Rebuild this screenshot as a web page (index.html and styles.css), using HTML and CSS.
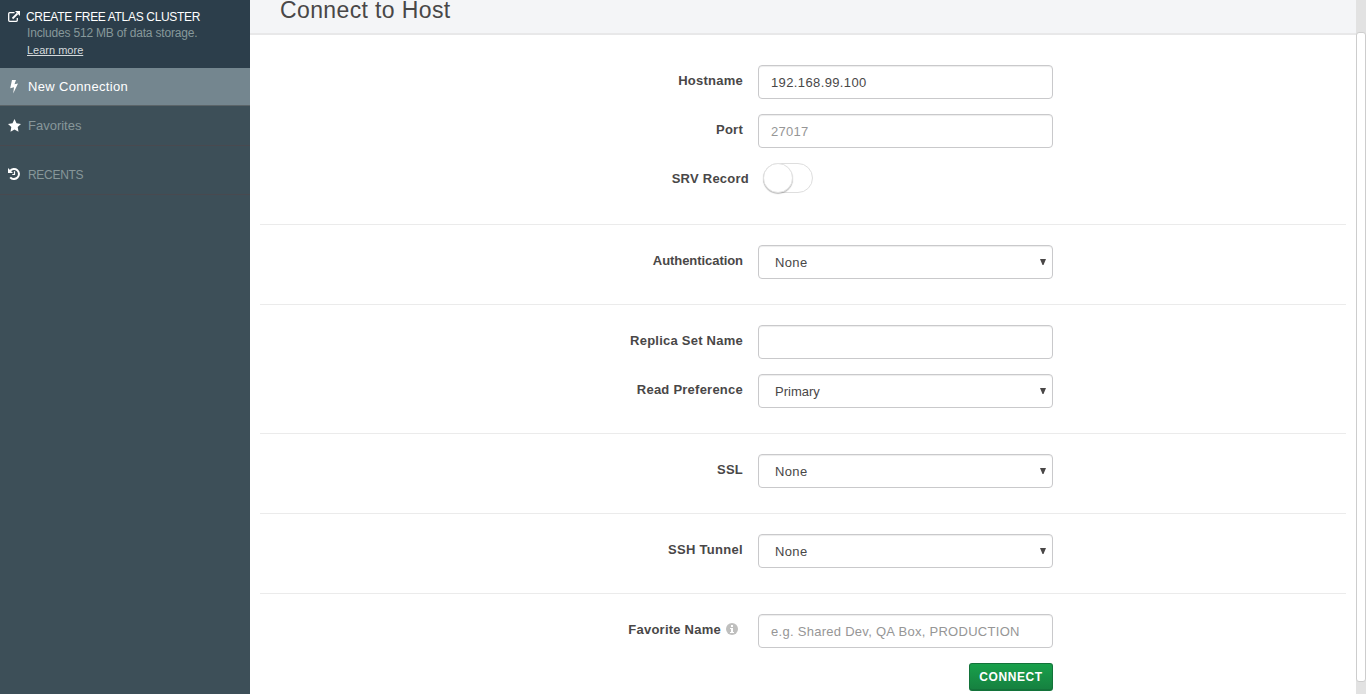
FILE: index.html
```html
<!DOCTYPE html>
<html lang="en">
<head>
<meta charset="utf-8">
<title>Connect to Host</title>
<link rel="stylesheet" href="styles.css">
</head>
<body>
<div class="app">
  <aside class="sidebar">
    <div class="atlas">
      <svg class="atlas-icon" width="12" height="12" viewBox="0 0 12 12"><path d="M6.500 1.700H1.700Q.7 1.700.7 2.700v6.600q0 1 1 1h6.600q1 0 1-1V7" fill="none" stroke="#fff" stroke-width="1.300"/><path d="M4.500 7.500L9.500 2.500" stroke="#fff" stroke-width="1.800"/><path d="M7 0h5v5z" fill="#fff"/></svg>
      <div class="atlas-text">
        <div class="atlas-title"><span>CREATE FREE ATLAS CLUSTER</span></div>
        <div class="atlas-sub"><span>Includes 512 MB of data storage.</span></div>
        <a class="atlas-link">Learn more</a>
      </div>
    </div>
    <div class="nav active">
      <svg width="12" height="14" viewBox="0 0 12 14"><path d="M4 0h4L6.500 4.300 10 3.500 5.200 13.500 6 7.300 2.200 8.200z" fill="#fff"/></svg>
      <span class="new">New Connection</span>
    </div>
    <div class="nav favorites">
      <svg width="13" height="13" viewBox="0 0 13 13"><path d="M6.500 0l2 4.300 4.500.6-3.300 3.200.8 4.600-4-2.200-4 2.200.8-4.600L0 4.900l4.500-.6z" fill="#fff"/></svg>
      <span class="fav">Favorites</span>
    </div>
    <div class="nav recents">
      <svg width="12" height="12" viewBox="0 0 12 12"><path d="M2 3A5 5 0 1 1 2.200 9.300" fill="none" stroke="#fff" stroke-width="2"/><path d="M0 0v5h5z" fill="#fff"/><path d="M6.500 3.200v3.300H4.300" fill="none" stroke="#fff" stroke-width="1.200"/></svg>
      <span class="rec">RECENTS</span>
    </div>
  </aside>
  <main class="main">
    <header class="header"><h1>Connect to Host</h1></header>
    <form class="form">
      <section class="group first">
        <div class="row"><label>Hostname</label><div class="field"><span class="t-ip">192.168.99.100</span></div></div>
        <div class="row"><label>Port</label><div class="field hint"><span>27017</span></div></div>
        <div class="row srv"><label>SRV Record</label><div class="toggle"><div class="knob"></div></div></div>
      </section>
      <section class="group">
        <div class="row"><label class="l-auth">Authentication</label><div class="field select"><span class="t-none">None</span><svg width="6" height="6" viewBox="0 0 6 6"><path d="M0 0h6L3.500 6h-1z"/></svg></div></div>
      </section>
      <section class="group">
        <div class="row"><label>Replica Set Name</label><div class="field"></div></div>
        <div class="row"><label>Read Preference</label><div class="field select"><span>Primary</span><svg width="6" height="6" viewBox="0 0 6 6"><path d="M0 0h6L3.500 6h-1z"/></svg></div></div>
      </section>
      <section class="group">
        <div class="row"><label>SSL</label><div class="field select"><span class="t-none">None</span><svg width="6" height="6" viewBox="0 0 6 6"><path d="M0 0h6L3.500 6h-1z"/></svg></div></div>
      </section>
      <section class="group">
        <div class="row"><label class="l-ssh">SSH Tunnel</label><div class="field select"><span class="t-none">None</span><svg width="6" height="6" viewBox="0 0 6 6"><path d="M0 0h6L3.500 6h-1z"/></svg></div></div>
      </section>
      <section class="group last">
        <div class="row"><label>Favorite Name</label><svg class="info" width="12" height="12" viewBox="0 0 12 12"><circle cx="6" cy="6" r="6" fill="#bfbfbe"/><path d="M5 2h2v2H5zM4 5h3v4h1v1H4V9h1V6H4z" fill="#fff"/></svg><div class="field hint"><span>e.g. Shared Dev, QA Box, PRODUCTION</span></div></div>
        <div class="actions"><div class="button"><span>CONNECT</span></div></div>
      </section>
    </form>
  </main>
  <div class="scrollbar"><div class="thumb"></div></div>
</div>
</body>
</html>
```
FILE: styles.css
```css
* { box-sizing: border-box; }
body { margin: 0; overflow: hidden; background: #fff; color: #494747; font-family: "Liberation Sans", Arial, sans-serif; font-size: 13px; }
span, label, a, h1 { white-space: nowrap; }
.app { display: flex; width: 1366px; height: 694px; overflow: hidden; }

.sidebar { width: 250px; flex: none; background: #3d4f58; }
.atlas { display: flex; height: 68px; padding: 8px 0 0 8px; background: #2c3e4b; }
.atlas-icon { margin-top: 3px; flex: none; }
.atlas-text { margin-left: 6px; }
.atlas-title { height: 17px; line-height: 18px; color: #fff; font-size: 12px; letter-spacing: -.33px; }
.atlas-sub { height: 17px; line-height: 17px; padding-left: 1px; color: #87989a; font-size: 12px; letter-spacing: -.18px; }
.atlas-link { display: block; width: max-content; margin-left: 1px; line-height: 16px; color: #d5dadd; font-size: 11px; text-decoration: underline; }
.nav { display: flex; align-items: center; height: 39px; padding-left: 8px; color: #87979a; border-bottom: 1px solid #48494f; }
.nav svg { flex: none; }
.nav span { margin-left: 8px; }
.active { height: 38px; background: #74868f; color: #fff; border-color: #5b6468; }
.active .new { letter-spacing: .34px; }
.favorites { height: 40px; }
.favorites .fav { margin-left: 7px; }
.recents { height: 49px; padding-top: 8px; }
.recents .rec { font-size: 12px; letter-spacing: -.3px; padding-top: 1px; }

.main { width: 1106px; flex: none; }
.header { height: 35px; background: #f4f5f7; border-bottom: 2px solid #e8e8e9; }
.header h1 { margin: 0; padding-left: 30px; font-size: 23px; font-weight: 400; line-height: 20px; letter-spacing: .38px; }
.form { padding: 0 10px; }
.group { padding: 20px 0 10px; border-bottom: 1px solid #ebebeb; }
.group.first { padding-top: 30px; }
.group.last { border: 0; }
.row { display: flex; height: 34px; margin-bottom: 15px; }
.row.srv { height: 36px; }
label { width: 483px; line-height: 31px; text-align: right; font-weight: 700; letter-spacing: .24px; }
.l-auth { letter-spacing: -.06px; }
.l-ssh { letter-spacing: .3px; }
.field { display: flex; align-items: center; width: 295px; height: 34px; margin-left: 15px; padding: 1px 12px 0; border: 1px solid #c9c9cb; border-radius: 4px; box-shadow: inset 0 1px 1px rgba(0,0,0,.075); color: #494747; }
.t-ip { letter-spacing: .38px; }
.hint { color: #969696; letter-spacing: .28px; }
.select { padding: 1px 6px 0 16px; justify-content: space-between; }
.select svg { fill: #494747; margin-top: -2px; }
.t-none { letter-spacing: .35px; }
.srv label { width: 489px; }
.toggle { width: 50px; height: 30px; margin-left: 14px; border: 1px solid #dedede; border-radius: 15px; }
.knob { width: 30px; height: 30px; margin: -1px; border-radius: 50%; background: #fff; border: 1px solid #e2e2e2; box-shadow: 0 1px 1px rgba(0,0,0,.25); }
.last label { width: 461px; }
.info { margin: 9px 5px 0; flex: none; }
.actions { display: flex; width: 793px; justify-content: flex-end; }
.button { display: flex; align-items: center; justify-content: center; width: 84px; height: 28px; padding-top: 1px; border: 1px solid #13733a; border-bottom-width: 2px; border-radius: 3px; background: linear-gradient(#18a04b, #168140); color: #fff; font-size: 12px; font-weight: 700; letter-spacing: .6px; }
.scrollbar { width: 10px; background: #e2e2e2; padding-top: 32px; }
.thumb { height: 650px; background: #fff; border: 1px solid #cdcdcd; border-radius: 3px; }
```
